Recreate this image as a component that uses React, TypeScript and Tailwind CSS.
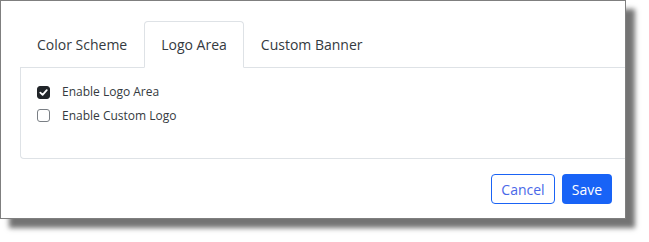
import React, { useState } from 'react';

const tabs = ['Color Scheme', 'Logo Area', 'Custom Banner'];

const CheckBox: React.FC<{ checked: boolean; onToggle: () => void }> = ({ checked, onToggle }) => (
    <button
        onClick={onToggle}
        className={`w-[13px] h-[13px] rounded-[3px] flex items-center justify-center shrink-0 ${
            checked ? 'bg-[#212529] border border-[#212529]' : 'bg-white border border-[#7a7f85]'
        }`}
    >
        {checked && (
            <svg width="9" height="9" viewBox="0 0 10 10" fill="none">
                <path d="M1.5 5.2 L4 7.6 L8.6 2.4" stroke="white" strokeWidth="2" strokeLinecap="round" strokeLinejoin="round" />
            </svg>
        )}
    </button>
);

export default function App() {
    const [active, setActive] = useState(1);
    const [logoArea, setLogoArea] = useState(true);
    const [customLogo, setCustomLogo] = useState(false);

    return (
        <div className="w-[649px] h-[242px] bg-white" style={{ fontFamily: '"Open Sans", sans-serif' }}>
            <div className="w-[626px] h-[219px] bg-white border border-[#7f7f7f] shadow-[9px_9px_5px_rgba(0,0,0,0.55)] overflow-hidden flex flex-col">
                <div className="pt-5 pl-[19px]">
                    {/* Tabs */}
                    <div className="flex border-b border-[#dee2e6] h-[47px]">
                        {tabs.map((t, i) => (
                            <button
                                key={t}
                                onClick={() => setActive(i)}
                                className={`h-[47px] px-4 text-[14px] text-[#343a40] rounded-t-[4px] border ${
                                    active === i
                                        ? 'border-[#dee2e6] border-b-white bg-white mb-[-1px]'
                                        : 'border-transparent'
                                }`}
                            >
                                {t}
                            </button>
                        ))}
                    </div>

                    {/* Panel */}
                    <div className="h-[91px] border-l border-b border-[#dee2e6] rounded-bl-[4px] pl-4 pt-3 text-[12px] text-[#343a40]">
                        <label className="flex items-center gap-3 h-[24px]">
                            <CheckBox checked={logoArea} onToggle={() => setLogoArea(!logoArea)} />
                            <span>Enable Logo Area</span>
                        </label>
                        <label className="flex items-center gap-3 h-[23px]">
                            <CheckBox checked={customLogo} onToggle={() => setCustomLogo(!customLogo)} />
                            <span>Enable Custom Logo</span>
                        </label>
                    </div>
                </div>

                {/* Footer */}
                <div className="flex justify-end gap-[7px] pt-[15px] pr-[13px]">
                    <button className="w-[64px] h-[30px] rounded-[4px] border border-[#1a63f5] text-[#4a68e8] text-[14px] bg-white">
                        Cancel
                    </button>
                    <button className="w-[50px] h-[30px] rounded-[4px] bg-[#1863f6] text-white text-[14px]">
                        Save
                    </button>
                </div>
            </div>
        </div>
    );
}
